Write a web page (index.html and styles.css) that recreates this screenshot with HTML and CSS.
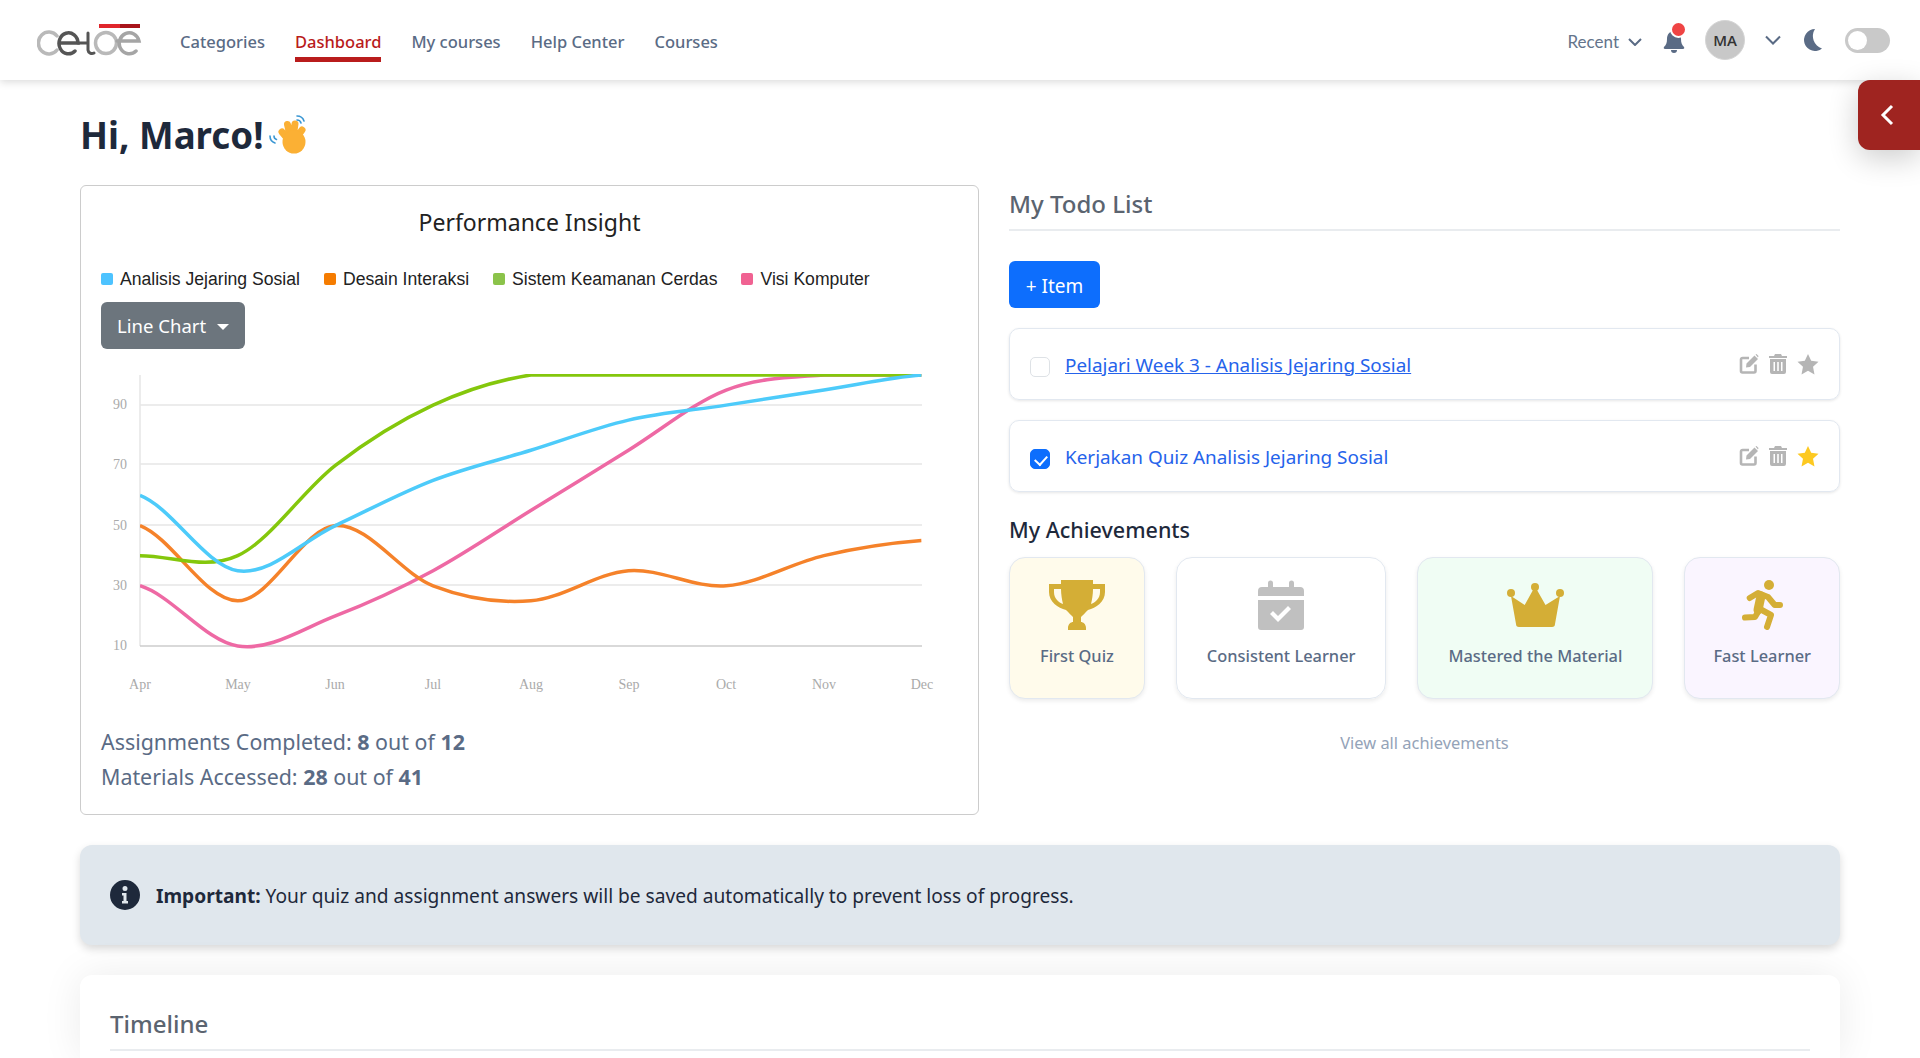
FILE: index.html
```html
<!DOCTYPE html>
<html lang="en">
<head>
    <meta charset="UTF-8">
    <meta name="viewport" content="width=device-width, initial-scale=1.0">
    <title>CeLOE Dashboard</title>
    <link rel="stylesheet" href="styles.css">
</head>
<body>
    <!-- Top navigation -->
    <header class="topbar">
        <svg class="logo" viewBox="0 0 105 32" fill="none" stroke-linecap="round">
            <path d="M62 2H83" stroke="#e0262c" stroke-width="4" stroke-linecap="butt"/>
            <path d="M83 2H103" stroke="#a8141a" stroke-width="4" stroke-linecap="butt"/>
            <path d="M20 12a10.500 11 0 1 0 0 14" stroke="#b9b9b9" stroke-width="3.500"/>
            <path d="M22 19H41a9.500 10.500 0 1 0-3 8" stroke="#555" stroke-width="3.500"/>
            <path d="M41 19H51V9M51 19v7a4 4 0 0 0 6 3" stroke="#555" stroke-width="3"/>
            <circle cx="69" cy="19" r="10.500" stroke="#b9b9b9" stroke-width="3.500"/>
            <path d="M80 17H102a10 10.500 0 1 0-3 10" stroke="#a5a5a5" stroke-width="3.500"/>
        </svg>
        <nav class="nav-links">
            <a href="#">Categories</a>
            <a href="#" class="active">Dashboard</a>
            <a href="#">My courses</a>
            <a href="#">Help Center</a>
            <a href="#">Courses</a>
        </nav>
        <div class="top-actions">
            <span class="recent">Recent
                <svg class="chev chev-small" viewBox="0 0 14 8"><path d="M1 1l6 6 6-6"/></svg>
            </span>
            <span class="bell">
                <svg viewBox="0 0 22 22"><path d="M11 0c4 0 7 3 7 8 0 4 1 6 3 8 .700 1 0 2-1 2H2c-1 0-1.700-1-1-2 2-2 3-4 3-8 0-5 3-8 7-8zM8 19h6a3 3 0 0 1-6 0z"/></svg>
                <i class="bell-dot"></i>
            </span>
            <span class="avatar">MA</span>
            <svg class="chev" viewBox="0 0 16 10"><path d="M1 1.500l7 7 7-7"/></svg>
            <svg class="moon" viewBox="0 0 20 22"><path d="M13 0a11 11 0 1 0 7 19.500A13 13 0 0 1 13 0z"/></svg>
            <span class="toggle"><i></i></span>
        </div>
    </header>

    <button class="side-tab">
        <svg viewBox="0 0 14 22"><path d="M12 2L3 11l9 9"/></svg>
    </button>

    <main class="page">
        <h1 class="hello">Hi, Marco!
            <svg class="wave" viewBox="0 0 42 40">
                <g class="wave-hand">
                    <path d="M25 29L15 17M25 29L20.500 9.500M25 29L28 9M25 29L35 15"/>
                    <circle cx="27" cy="27" r="11.500"/>
                </g>
                <path class="wave-arcs" d="M30 1c3 0 6 2 7 5M30 5c2 0 3.500 1 4 3M3 21c0 3 2 6 5 7M7 21c0 1.500 1 3 2.500 3.500"/>
            </svg>
        </h1>

        <div class="columns">
            <section class="insight-card">
                <h2 class="insight-title">Performance Insight</h2>
                <ul class="legend">
                    <li><i class="sw-blue"></i>Analisis Jejaring Sosial</li>
                    <li><i class="sw-orange"></i>Desain Interaksi</li>
                    <li><i class="sw-green"></i>Sistem Keamanan Cerdas</li>
                    <li><i class="sw-pink"></i>Visi Komputer</li>
                </ul>
                <button class="chart-btn">Line Chart <i class="caret"></i></button>
                <svg class="chart" viewBox="0 0 860 335">
                    <clipPath id="plot"><rect x="0" y="9" width="48" height="92"/></clipPath>
                    <g class="grid">
                        <path d="M59 1V272"/>
                        <path d="M59 31H841M59 90H841M59 151H841M59 211H841"/>
                        <path class="base" d="M59 272H841"/>
                    </g>
                    <g class="y-labels">
                        <text x="46" y="35">90</text>
                        <text x="46" y="95">70</text>
                        <text x="46" y="156">50</text>
                        <text x="46" y="216">30</text>
                        <text x="46" y="276">10</text>
                    </g>
                    <g class="x-labels">
                        <text x="59" y="315">Apr</text>
                        <text x="157" y="315">May</text>
                        <text x="254" y="315">Jun</text>
                        <text x="352" y="315">Jul</text>
                        <text x="450" y="315">Aug</text>
                        <text x="548" y="315">Sep</text>
                        <text x="645" y="315">Oct</text>
                        <text x="743" y="315">Nov</text>
                        <text x="841" y="315">Dec</text>
                    </g>
                    <!-- x is month * 6, y is the plain value -->
                    <g class="lines" transform="translate(59 302.100) scale(16.283 -3.011)" clip-path="url(#plot)">
                        <path class="line-pink" d="M0 30C2 26.670 4 11.670 6 10C8 8.330 10 15.830 12 20C14 24.170 16 29.170 18 35C20 40.830 22 48.330 24 55C26 61.670 28 68.330 30 75C32 81.670 34 90.830 36 95C38 99.170 40 99.170 42 100L48 100"/>
                        <path class="line-orange" d="M0 50C2 45.830 4 25 6 25C8 25 10 49.170 12 50C14 50.830 16 34.170 18 30C20 25.830 22 24.170 24 25C26 25.830 28 34.170 30 35C32 35.830 34 29.170 36 30C38 30.830 40 37.500 42 40C44 42.500 46 44.170 48 45"/>
                        <path class="line-green" d="M0 40C2 40 4 35 6 40C8 45 10 61.670 12 70C14 78.330 16 85 18 90C20 95 22 98.330 24 100L48 100"/>
                        <path class="line-blue" d="M0 60C2 55.830 4 36.670 6 35C8 33.330 10 45 12 50C14 55 16 60.830 18 65C20 69.170 22 71.670 24 75C26 78.330 28 82.500 30 85C32 87.500 34 88.330 36 90C38 91.670 40 93.330 42 95C44 96.670 46 99.170 48 100"/>
                    </g>
                </svg>
                <p class="stat">Assignments Completed: <b>8</b> out of <b>12</b></p>
                <p class="stat">Materials Accessed: <b>28</b> out of <b>41</b></p>
            </section>

            <section class="right-col">
                <h2 class="todo-title">My Todo List</h2>
                <button class="add-btn">+ Item</button>

                <div class="todo-item">
                    <input type="checkbox" class="todo-check">
                    <a href="#" class="todo-link underlined">Pelajari Week 3 - Analisis Jejaring Sosial</a>
                    <span class="todo-icons">
                        <svg class="ic-edit" viewBox="0 0 20 20"><path class="ic-box" d="M10 4H3.500A1.500 1.500 0 0 0 2 5.500V17a1.500 1.500 0 0 0 1.500 1.500H15a1.500 1.500 0 0 0 1.500-1.500V10.500"/><path d="M7.500 9.500L15.500 1.500 19 5 11 13 7 13.500zM16.500.500l1-.500 2 2-.500 1.500z"/></svg>
                        <svg class="ic-trash" viewBox="0 0 18 20"><path d="M6 0h6l1 2h5v2H0V2h5zM1 5h16v13a2 2 0 0 1-2 2H3a2 2 0 0 1-2-2zM4.500 8v9H6V8zM8.200 8v9h1.600V8zM12 8v9h1.500V8z"/></svg>
                        <svg class="ic-star" viewBox="0 0 24 23"><path d="M12 0l3.500 7.500 8 1-6 5.500 1.600 8.500-7.100-4.100-7.100 4.100L6.500 14l-6-5.500 8-1z"/></svg>
                    </span>
                </div>

                <div class="todo-item">
                    <input type="checkbox" class="todo-check" checked>
                    <a href="#" class="todo-link">Kerjakan Quiz Analisis Jejaring Sosial</a>
                    <span class="todo-icons">
                        <svg class="ic-edit" viewBox="0 0 20 20"><path class="ic-box" d="M10 4H3.500A1.500 1.500 0 0 0 2 5.500V17a1.500 1.500 0 0 0 1.500 1.500H15a1.500 1.500 0 0 0 1.500-1.500V10.500"/><path d="M7.500 9.500L15.500 1.500 19 5 11 13 7 13.500zM16.500.500l1-.500 2 2-.500 1.500z"/></svg>
                        <svg class="ic-trash" viewBox="0 0 18 20"><path d="M6 0h6l1 2h5v2H0V2h5zM1 5h16v13a2 2 0 0 1-2 2H3a2 2 0 0 1-2-2zM4.500 8v9H6V8zM8.200 8v9h1.600V8zM12 8v9h1.500V8z"/></svg>
                        <svg class="ic-star on" viewBox="0 0 24 23"><path d="M12 0l3.500 7.500 8 1-6 5.500 1.600 8.500-7.100-4.100-7.100 4.100L6.500 14l-6-5.500 8-1z"/></svg>
                    </span>
                </div>

                <h3 class="ach-title">My Achievements</h3>
                <div class="ach-row">
                    <div class="ach-card ach-yellow">
                        <svg viewBox="0 0 58 50"><path fill-rule="evenodd" d="M13 0H45V4H57V12C57 22 48 28 40 30C37 33 35 35 33 37V42C35 42 38 44 38 48V50H20V48C20 44 23 42 25 42V37C23 35 21 33 18 30C10 28 1 22 1 12V4H13ZM6 9V12C6 18 10 22 15 24C14 20 13 14 13 9ZM52 9H45C45 14 44 20 43 24C48 22 52 18 52 12Z"/></svg>
                        <span>First Quiz</span>
                    </div>
                    <div class="ach-card">
                        <svg class="grey" viewBox="0 0 46 50"><path fill-rule="evenodd" d="M10 3a2.500 2.500 0 0 1 5 0v4h16V3a2.500 2.500 0 0 1 5 0v4h6a4 4 0 0 1 4 4v5H0v-5a4 4 0 0 1 4-4h6zM0 20h46v27a3 3 0 0 1-3 3H3a3 3 0 0 1-3-3zM12 34l8 8 13-13-3-3-10 10-5-5z"/></svg>
                        <span>Consistent Learner</span>
                    </div>
                    <div class="ach-card ach-green">
                        <svg class="crown" viewBox="0 0 57 44"><circle cx="4" cy="10" r="4"/><circle cx="28" cy="4" r="4"/><circle cx="53" cy="10" r="4"/><path d="M4 13L17.700 22 26 7h4L38.500 22 53 13 48 41a3 3 0 0 1-3 3H12a3 3 0 0 1-3-3z"/></svg>
                        <span>Mastered the Material</span>
                    </div>
                    <div class="ach-card ach-purple">
                        <svg class="runner" viewBox="0 0 41 50">
                            <circle cx="27" cy="5" r="5"/>
                            <path d="M7.700 18L16 13 26 17 32.700 25 38 25"/>
                            <path d="M16 32L13 37 3 37.500"/>
                            <path d="M18 29L29 35 25 47"/>
                            <path class="torso" d="M19 16L16 30"/>
                        </svg>
                        <span>Fast Learner</span>
                    </div>
                </div>
                <a href="#" class="view-all">View all achievements</a>
            </section>
        </div>

        <div class="alert">
            <svg class="alert-icon" viewBox="0 0 30 30"><path fill-rule="evenodd" d="M15 0a15 15 0 1 1 0 30a15 15 0 0 1 0-30zM15 6a2.500 2.500 0 1 0 0 5a2.500 2.500 0 0 0 0-5zM12 13v2.500h1.500V21H12v2.500h6V21h-1.500V13z"/></svg>
            <p><b>Important:</b> Your quiz and assignment answers will be saved automatically to prevent loss of progress.</p>
        </div>

        <section class="timeline">
            <h2>Timeline</h2>
        </section>
    </main>
</body>
</html>
```

FILE: styles.css
```css
* {
    box-sizing: border-box;
}

html, body {
    margin: 0;
    height: 100%;
    overflow: hidden;
}

body {
    background: #fff;
    color: #1e293b;
    font-family: "Noto Sans", sans-serif;
    font-size: 18px;
}

/* Top navigation */
.topbar {
    display: flex;
    align-items: center;
    height: 80px;
    padding: 0 30px 0 37px;
    background: #fff;
    box-shadow: 0 2px 8px rgba(0,0,0,0.15);
}

.logo {
    width: 105px;
    height: 32px;
    margin-right: 38px;
}

.nav-links {
    display: flex;
    gap: 30px;
    align-self: stretch;
    align-items: center;
    padding-top: 2px;
}

.nav-links a {
    position: relative;
    color: #5a6b85;
    text-decoration: none;
    font-size: 16.500px;
    font-weight: 500;
}

.nav-links a.active {
    color: #b91c1c;
}

.nav-links a.active::after {
    content: "";
    position: absolute;
    left: 0;
    right: 0;
    bottom: -9px;
    height: 5px;
    background: #b91c1c;
}

.top-actions {
    display: flex;
    align-items: center;
    margin-left: auto;
}

.recent {
    display: flex;
    align-items: center;
    gap: 9px;
    padding-top: 2px;
    color: #64748b;
    font-family: "Lato", sans-serif;
    font-size: 17px;
}

.chev {
    width: 16px;
    height: 10px;
    margin: 0 21px 0 20px;
    fill: none;
    stroke: #5a6b85;
    stroke-width: 2;
}

.chev-small {
    width: 14px;
    height: 8px;
    margin: 2px 0 0;
}

.bell {
    position: relative;
    width: 22px;
    height: 22px;
    margin: 4px 20px 0 21px;
}

.bell svg {
    display: block;
    width: 22px;
    height: 22px;
    fill: #5a6b85;
}

.bell-dot {
    position: absolute;
    top: -10px;
    left: 7px;
    width: 17px;
    height: 17px;
    border: 2px solid #fff;
    border-radius: 50%;
    background: #ef4444;
}

.avatar {
    display: flex;
    align-items: center;
    justify-content: center;
    width: 40px;
    height: 40px;
    border-radius: 50%;
    background: #c8c8c8;
    border: 1px solid #d5d5d5;
    color: #333;
    font-family: "Open Sans", sans-serif;
    font-size: 15px;
    font-weight: 600;
}

.moon {
    width: 20px;
    height: 22px;
    fill: #5a6b85;
}

.toggle {
    display: block;
    width: 45px;
    height: 25px;
    margin-left: 23px;
    padding: 3px;
    border-radius: 13px;
    background: #c9c9c9;
}

.toggle i {
    display: block;
    width: 19px;
    height: 19px;
    border-radius: 50%;
    background: #fff;
}

.side-tab {
    position: absolute;
    top: 80px;
    right: 0;
    width: 62px;
    height: 70px;
    padding: 0;
    border: 0;
    border-radius: 12px 0 0 12px;
    background: #9f2420;
    box-shadow: 0 8px 30px rgba(0,0,0,0.2);
}

.side-tab svg {
    display: block;
    width: 14px;
    height: 22px;
    margin: 0 0 0 22px;
    fill: none;
    stroke: #fff;
    stroke-width: 3;
}

/* Page body */
.page {
    padding: 0 80px;
}

.hello {
    display: flex;
    align-items: center;
    gap: 4px;
    height: 105px;
    margin: 0;
    padding-top: 5px;
    font-size: 36.700px;
    font-weight: 700;
    color: #1e293b;
}

.wave {
    width: 42px;
    height: 40px;
    margin-top: -1px;
}

.wave-hand path {
    fill: none;
    stroke: #fbb034;
    stroke-width: 7;
    stroke-linecap: round;
}

.wave-hand circle {
    fill: #fbb034;
}

.wave-arcs {
    fill: none;
    stroke: #3b97d3;
    stroke-width: 1.600;
    stroke-linecap: round;
}

.columns {
    display: flex;
    gap: 30px;
    align-items: flex-start;
}

.insight-card {
    width: 899px;
    height: 630px;
    padding: 0 20px;
    border: 1px solid #ccc;
    border-radius: 6px;
}

.insight-title {
    margin: 18px 0 0;
    text-align: center;
    font-size: 23px;
    font-weight: 400;
    line-height: 36px;
    color: #222;
}

.legend {
    display: flex;
    gap: 24px;
    margin: 27px 0 0;
    padding: 0;
    list-style: none;
    font-family: "Liberation Sans", sans-serif;
    font-size: 17.600px;
    line-height: 24px;
    color: #222;
}

.legend li {
    display: flex;
    align-items: center;
    gap: 7px;
}

.legend i {
    width: 12px;
    height: 12px;
    border-radius: 2px;
}

.sw-blue { background: #4dc3ff; }
.sw-orange { background: #f57c00; }
.sw-green { background: #8bc34a; }
.sw-pink { background: #f06292; }

.chart-btn {
    display: block;
    width: 144px;
    height: 47px;
    margin-top: 11px;
    padding: 0;
    border: 0;
    border-radius: 6px;
    background: #6c757d;
    color: #fff;
    font-family: "Noto Sans", sans-serif;
    font-size: 18.500px;
}

.caret {
    display: inline-block;
    margin-left: 6px;
    vertical-align: 3px;
    border-top: 6px solid #fff;
    border-left: 6px solid transparent;
    border-right: 6px solid transparent;
}

.chart {
    display: block;
    width: 860px;
    height: 335px;
    margin: 25px 0 0 -20px;
}

.grid path {
    fill: none;
    stroke: #e6e6e6;
    stroke-width: 1.500;
}

.grid .base {
    stroke: #ccc;
}

.y-labels text, .x-labels text {
    font-family: "Liberation Serif", serif;
    font-size: 14px;
    fill: #aaa;
}

.y-labels text {
    text-anchor: end;
}

.x-labels text {
    text-anchor: middle;
}

.lines path {
    fill: none;
    stroke-width: 3.500;
    vector-effect: non-scaling-stroke;
}

.line-pink { stroke: #ee69a4; }
.line-orange { stroke: #f5822a; }
.line-green { stroke: #84c70c; }
.line-blue { stroke: #4dcbfa; }

.stat {
    margin: 0;
    line-height: 35px;
    font-size: 21.400px;
    color: #5a6b85;
}

.stat:first-of-type {
    margin-top: 15px;
}

/* Todo list */
.right-col {
    flex: 1;
    min-width: 0;
}

.todo-title {
    height: 46px;
    margin: 0;
    border-bottom: 2px solid #e9ecef;
    font-size: 24px;
    font-weight: 500;
    line-height: 38px;
    color: #5b6470;
}

.add-btn {
    display: block;
    width: 91px;
    height: 47px;
    margin: 30px 0 20px;
    padding: 3px 0 0;
    border: 0;
    border-radius: 6px;
    background: #0d6efd;
    color: #fff;
    font-family: "Noto Sans", sans-serif;
    font-size: 19px;
}

.todo-item {
    display: flex;
    align-items: center;
    height: 72px;
    margin-bottom: 20px;
    padding: 0 20px;
    border: 1px solid #e2e8f0;
    border-radius: 10px;
    box-shadow: 0 1px 3px rgba(0,0,0,0.1);
}

.todo-check {
    position: relative;
    appearance: none;
    width: 20px;
    height: 20px;
    margin: 6px 15px 0 0;
    border: 1px solid #dee2e6;
    border-radius: 5px;
    background: #fff;
}

.todo-check:checked {
    border-color: #0d6efd;
    background: #0d6efd;
}

.todo-check:checked::before {
    content: "";
    position: absolute;
    top: 3px;
    left: 6px;
    width: 6px;
    height: 10px;
    border: solid #fff;
    border-width: 0 2.500px 2.500px 0;
    transform: rotate(42deg);
}

.todo-link {
    padding-top: 1px;
    color: #2563eb;
    text-decoration: none;
    font-size: 18.900px;
}

.underlined {
    text-decoration: underline;
}

.todo-icons {
    display: flex;
    align-items: center;
    gap: 10px;
    margin-left: auto;
}

.todo-icons svg {
    display: block;
    fill: #b5b5b5;
}

.todo-icons .ic-box {
    fill: none;
    stroke: #b5b5b5;
    stroke-width: 2.600;
}

.ic-edit { width: 20px; height: 20px; }
.ic-trash { width: 18px; height: 20px; }
.ic-star { width: 22px; height: 21px; }
.todo-icons .ic-star.on { fill: #fdc921; }

/* Achievements */
.ach-title {
    margin: 23px 0 0;
    font-size: 21.500px;
    font-weight: 500;
    line-height: 30px;
    color: #1e293b;
}

.ach-row {
    display: flex;
    justify-content: space-between;
    margin-top: 12px;
}

.ach-card {
    display: flex;
    flex-direction: column;
    align-items: center;
    height: 142px;
    padding: 22px 30px 0;
    border: 1px solid #e2e8f0;
    border-radius: 16px;
    box-shadow: 0 2px 4px rgba(0,0,0,0.08);
    color: #5a6b85;
    font-size: 16.400px;
    font-weight: 500;
}

.ach-card svg {
    display: block;
    height: 50px;
    margin-bottom: 14px;
    fill: #d4ae36;
}

.ach-card svg.grey {
    fill: #c0c0c0;
}

.ach-card svg.crown {
    height: 44px;
    margin: 3px 0 17px;
}

.runner path {
    fill: none;
    stroke: #d4ae36;
    stroke-width: 6;
    stroke-linecap: round;
    stroke-linejoin: round;
}

.runner .torso {
    stroke-width: 9;
}

.ach-yellow { background: #fffbeb; }
.ach-green { background: #f0fdf4; padding-left: 30px; padding-right: 30px; }
.ach-purple { background: #faf5ff; padding-left: 28px; padding-right: 28px; }

.view-all {
    display: block;
    margin-top: 32px;
    text-align: center;
    color: #94a3b8;
    text-decoration: none;
    font-size: 16.400px;
}

/* Alert and timeline */
.alert {
    display: flex;
    align-items: center;
    gap: 16px;
    height: 100px;
    margin-top: 30px;
    padding: 0 30px;
    border-radius: 12px;
    background: #e0e7ed;
    box-shadow: 0 4px 8px rgba(0,0,0,0.15);
    color: #1e293b;
    font-size: 19.150px;
}

.alert-icon {
    width: 30px;
    height: 30px;
    fill: #1e293b;
}

.alert p {
    margin: 0;
    padding-top: 1px;
}

.timeline {
    height: 83px;
    margin-top: 30px;
    padding: 26px 30px 0;
    border-radius: 12px 12px 0 0;
    background: #fff;
    box-shadow: 0 0 40px rgba(0,0,0,0.08);
}

.timeline h2 {
    height: 50px;
    margin: 0;
    border-bottom: 2px solid #e9ecef;
    font-size: 24px;
    font-weight: 500;
    line-height: 46px;
    color: #5b6470;
}
```
